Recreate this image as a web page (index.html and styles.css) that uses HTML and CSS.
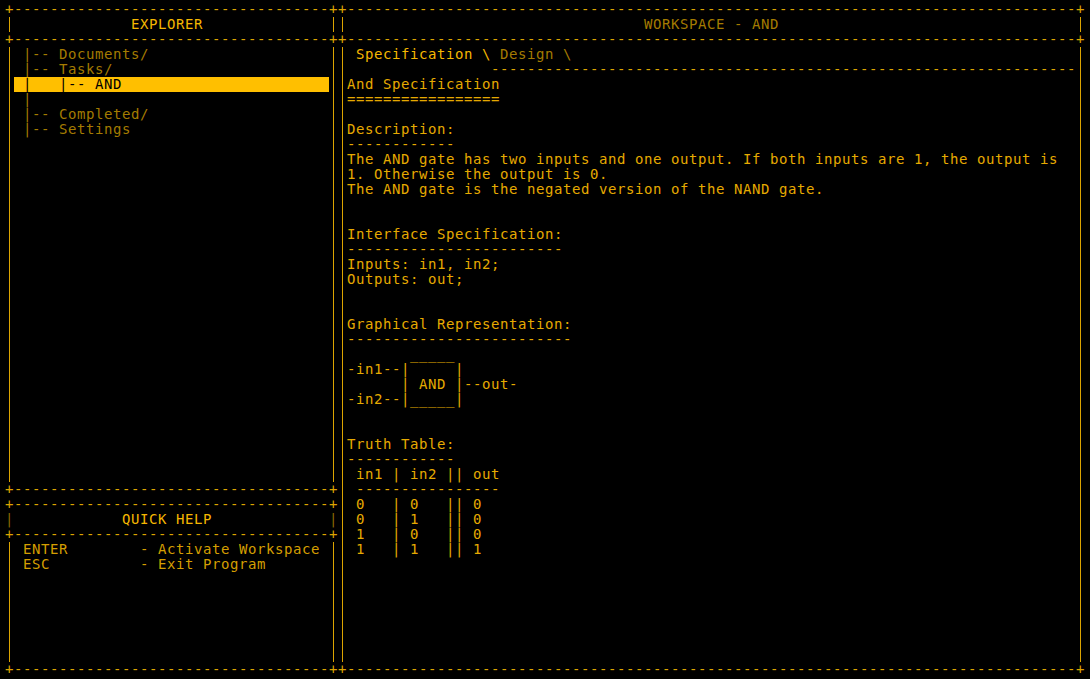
FILE: index.html
```html
<!DOCTYPE html>
<html lang="en">
<head>
<meta charset="utf-8">
<title>Explorer - Workspace</title>
<link rel="stylesheet" href="styles.css">
</head>
<body>
<div class="screen">
  <div class="col left">
    <section class="panel explorer">
      <div class="rule"><span class="c">+</span><span class="fill">-----------------------------------</span><span class="c">+</span></div>
      <div class="framed"><div class="ln bright">             EXPLORER</div></div>
      <div class="rule"><span class="c">+</span><span class="fill">-----------------------------------</span><span class="c">+</span></div>
      <div class="framed grow">
        <div class="ln dim"> |-- Documents/</div>
        <div class="ln dim"> |-- Tasks/</div>
        <div class="ln sel"> |   |-- AND</div>
        <div class="ln dim"> |</div>
        <div class="ln dim"> |-- Completed/</div>
        <div class="ln dim"> |-- Settings</div>
      </div>
      <div class="rule"><span class="c">+</span><span class="fill">-----------------------------------</span><span class="c">+</span></div>
    </section>
    <section class="panel help">
      <div class="rule"><span class="c">+</span><span class="fill">-----------------------------------</span><span class="c">+</span></div>
      <div class="rule"><span class="c faint">|</span><span class="fill bright">            QUICK HELP</span><span class="c faint">|</span></div>
      <div class="rule"><span class="c">+</span><span class="fill">-----------------------------------</span><span class="c">+</span></div>
      <div class="framed help-body">
        <div class="ln keys"> ENTER        - Activate Workspace</div>
        <div class="ln keys"> ESC          - Exit Program</div>
      </div>
      <div class="rule"><span class="c">+</span><span class="fill">-----------------------------------</span><span class="c">+</span></div>
    </section>
  </div>
  <div class="col right">
    <section class="panel workspace">
      <div class="rule"><span class="c">+</span><span class="fill">---------------------------------------------------------------------------------</span><span class="c">+</span></div>
      <div class="framed"><div class="ln dim">                                 WORKSPACE - AND</div></div>
      <div class="rule"><span class="c">+</span><span class="fill">---------------------------------------------------------------------------------</span><span class="c">+</span></div>
      <div class="framed grow">
        <div class="ln"> <span class="bright">Specification \</span> <span class="dim">Design \</span></div>
        <div class="ln line">                -----------------------------------------------------------------</div>
        <div class="ln">And Specification</div>
        <div class="ln">=================</div>
        <div class="ln"></div>
        <div class="ln">Description:</div>
        <div class="ln">------------</div>
        <div class="ln">The AND gate has two inputs and one output. If both inputs are 1, the output is</div>
        <div class="ln">1. Otherwise the output is 0.</div>
        <div class="ln">The AND gate is the negated version of the NAND gate.</div>
        <div class="ln"></div>
        <div class="ln"></div>
        <div class="ln">Interface Specification:</div>
        <div class="ln">------------------------</div>
        <div class="ln">Inputs: in1, in2;</div>
        <div class="ln">Outputs: out;</div>
        <div class="ln"></div>
        <div class="ln"></div>
        <div class="ln">Graphical Representation:</div>
        <div class="ln">-------------------------</div>
        <div class="ln">       _____</div>
        <div class="ln">-in1--|     |</div>
        <div class="ln">      | AND |--out-</div>
        <div class="ln">-in2--|_____|</div>
        <div class="ln"></div>
        <div class="ln"></div>
        <div class="ln">Truth Table:</div>
        <div class="ln">------------</div>
        <div class="ln"> in1 | in2 || out</div>
        <div class="ln"> ----------------</div>
        <div class="ln"> 0   | 0   || 0</div>
        <div class="ln"> 0   | 1   || 0</div>
        <div class="ln"> 1   | 0   || 0</div>
        <div class="ln"> 1   | 1   || 1</div>
      </div>
      <div class="rule"><span class="c">+</span><span class="fill">---------------------------------------------------------------------------------</span><span class="c">+</span></div>
    </section>
  </div>
</div>
</body>
</html>
```
FILE: styles.css
```css
:root {
  --line: #dca400;
  --text: #e6aa00;
  --bright: #f5b700;
  --dim: #a47b00;
  --keys: #d49e00;
  --faint: #8a6800;
  --hl: #ffbf00;
}

html, body {
  margin: 0;
  padding: 0;
  background: #000;
}

body {
  width: 1090px;
  height: 679px;
  overflow: hidden;
  font-family: "DejaVu Sans Mono", monospace;
  font-size: 14px;
  letter-spacing: 0.5713px;
  line-height: 15px;
  color: var(--text);
}

.screen {
  display: flex;
  padding: 2px 5px;
  height: 675px;
}

.col {
  display: flex;
  flex-direction: column;
}

.left { width: 333px; }
.right { width: 747px; }

.panel {
  display: flex;
  flex-direction: column;
}

.explorer, .workspace { flex: 1; }

.rule {
  display: flex;
  height: 15px;
  white-space: pre;
  color: var(--line);
}

.rule .c {
  width: 9px;
  flex: none;
}

.fill {
  flex: 1;
  min-width: 0;
}

.framed {
  padding: 0 9px;
  background-image: linear-gradient(var(--line), var(--line)), linear-gradient(var(--line), var(--line));
  background-size: 1px 100%, 1px 100%;
  background-repeat: no-repeat;
  background-position: left 4px top 0, right 4px top 0;
}

.grow { flex: 1; }

.help-body { height: 120px; }

.ln {
  height: 15px;
  white-space: pre;
}

.bright { color: var(--bright); }
.dim { color: var(--dim); }
.keys { color: var(--keys); }
.faint { color: var(--faint); }
.line { color: var(--line); }

.sel {
  background: var(--hl);
  color: #000;
}
```
